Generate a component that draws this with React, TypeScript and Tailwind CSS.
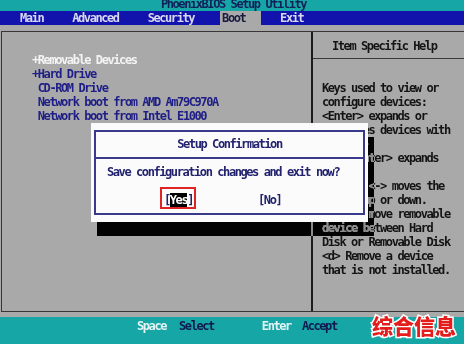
const mono = "font-['DejaVu_Sans_Mono','Liberation_Mono',monospace]";

const bootItems: { label: string; expandable?: boolean; active?: boolean }[] = [
  { label: "Removable Devices", expandable: true, active: true },
  { label: "Hard Drive", expandable: true },
  { label: "CD-ROM Drive" },
  { label: "Network boot from AMD Am79C970A" },
  { label: "Network boot from Intel E1000" },
];

const helpLines = [
  "Keys used to view or",
  "configure devices:",
  "<Enter> expands or",
  "collapses devices with",
  "a + or -",
  "<Ctrl+Enter> expands",
  "all",
  "<+> and <-> moves the",
  "device up or down.",
  "<n> May move removable",
  "device between Hard",
  "Disk or Removable Disk",
  "<d> Remove a device",
  "that is not installed.",
];

export default function App() {
  return (
    <div
      className={`relative flex h-[344px] w-[464px] flex-col overflow-hidden bg-[#a9a9a9] text-[12px] font-bold leading-[14px] tracking-[-1.42px] ${mono}`}
    >
      {/* title */}
      <div className="h-[11px] shrink-0 overflow-hidden bg-[#17a6a6]">
        <div className="-mt-[3px] h-[14px] pl-[3px] text-center text-[#10205a]">
          PhoenixBIOS Setup Utility
        </div>
      </div>

      {/* menu */}
      <div className="flex h-[14px] shrink-0 bg-[#1212ac] pl-[20px] text-[#d8d8f0]">
        <span>Main</span>
        <span className="ml-[29px]">Advanced</span>
        <span className="ml-[29px]">Security</span>
        <span className="ml-[26px] w-[41px] bg-[#a9a9a9] pl-[2px] text-[#1a1a40]">
          Boot
        </span>
        <span className="ml-[19px]">Exit</span>
      </div>

      {/* main frame */}
      <div className="h-[292px] shrink-0 pt-[6px]">
        <div className="ml-[1px] grid h-[281px] grid-cols-[309px_1fr] border-y border-l border-[#363636]">
          <div className="pl-[30px] pt-[21px] text-[#1e1e86]">
            {bootItems.map((item) => (
              <div
                key={item.label}
                className={`whitespace-pre ${item.active ? "text-[#f4f4f4]" : ""}`}
              >
                {item.expandable ? "+" : " "}
                {item.label}
              </div>
            ))}
          </div>
          <div className="border-l-2 border-[#1c1c1c] pt-[7px] text-[#141414]">
            <div className="pl-[19px]">Item Specific Help</div>
            <div className="mt-[5px] h-px bg-[#3a3a3a]" />
            <div className="pl-[9px] pt-[22px]">
              {helpLines.map((line, i) => (
                <div key={i} className="whitespace-pre">
                  {line}
                </div>
              ))}
            </div>
          </div>
        </div>
      </div>

      {/* footer */}
      <div className="flex flex-1 bg-[#17a6a6] pl-[137px] pt-[2px]">
        <span className="text-[#e4f4f4]">Space</span>
        <span className="ml-[13px] text-[#10184e]">Select</span>
        <span className="ml-[48px] text-[#e4f4f4]">Enter</span>
        <span className="ml-[11px] text-[#10184e]">Accept</span>
      </div>

      {/* watermark */}
      <div className="absolute left-[372px] top-[313px] font-['Noto_Sans_CJK_SC',sans-serif] text-[21px] font-black leading-[24px] tracking-normal text-[#e41c1c] [paint-order:stroke_fill] [-webkit-text-stroke:3px_#ffffff]">
        综合信息
      </div>

      {/* dialog shadow */}
      <div className="absolute left-[97px] top-[137px] h-[99px] w-[277px] [backdrop-filter:grayscale(1)_invert(1)_contrast(3)_brightness(0.55)]" />

      {/* dialog */}
      <div className="absolute left-[91px] top-[123px] w-[277px] bg-[#fbfbfb] px-[3px] py-[7px] text-[#22226e]">
        <div className="border-2 border-[#3a3a8c]">
          <div className="mt-[5px] text-center">Setup Confirmation</div>
          <div className="mt-[6px] h-[2px] bg-[#3a3a8c]" />
          <div className="mt-[6px] pl-[11px]">
            Save configuration changes and exit now?
          </div>
          <div className="mb-[6px] mt-[14px] flex pl-[68px]">
            <span className="relative">
              [<span className="bg-black text-white">Yes</span>]
              <span className="absolute -bottom-[2px] -left-[4px] -right-[3px] -top-[6px] border-2 border-[#e02424]" />
            </span>
            <span className="ml-[65px]">[No]</span>
          </div>
        </div>
      </div>
    </div>
  );
}
